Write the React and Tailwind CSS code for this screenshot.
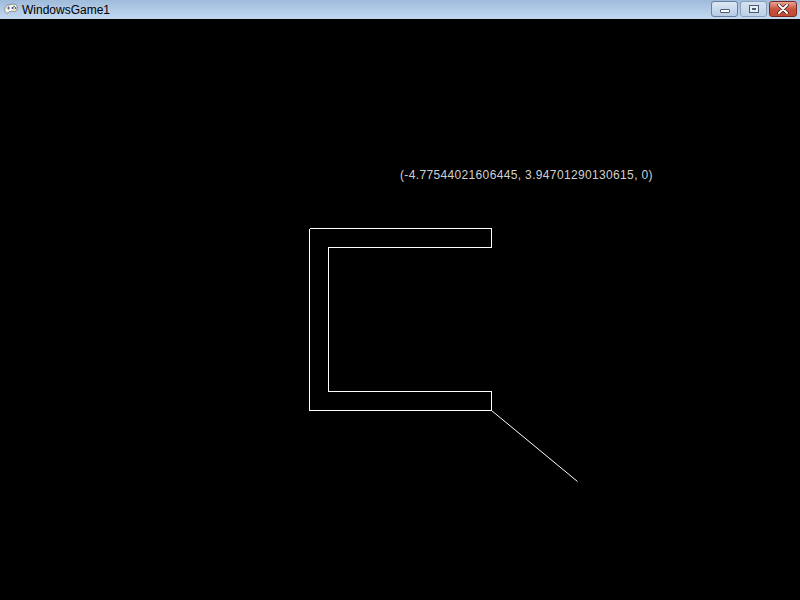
import React from "react";

function PadIcon() {
  return (
    <svg width="16" height="16" viewBox="0 0 16 16">
      <path d="M2 10 C1 7 3 4 6 4 L10 3 C13 3 15 5 14 8 C13 11 11 11 9 10 L6 11 C4 13 2 12 2 10 Z" fill="#f4f4f4" stroke="#777" strokeWidth="0.8" />
      <circle cx="11" cy="5.5" r="0.9" fill="#3a3" />
      <circle cx="12.5" cy="7" r="0.9" fill="#c33" />
      <circle cx="9.5" cy="7" r="0.9" fill="#33c" />
      <circle cx="11" cy="8.3" r="0.9" fill="#cc3" />
      <path d="M4 7 h3 M5.5 5.5 v3" stroke="#666" strokeWidth="1" />
    </svg>
  );
}

export default function App() {
  return (
    <div className="w-[800px] h-[600px] flex flex-col bg-black overflow-hidden">
      <div className="h-[19px] flex items-center bg-gradient-to-b from-[#9fbbdb] to-[#c3d9f0] relative">
        <div className="ml-[3px] mt-[-1px]"><PadIcon /></div>
        <span className="ml-[3px] text-[12px] leading-none text-black" style={{ fontFamily: '"Liberation Sans", Arial, sans-serif' }}>WindowsGame1</span>
        <div className="ml-auto mr-[3px] flex items-start gap-[2px] self-start mt-[1px]">
          <div className="w-[27px] h-[16px] rounded-[3px] border border-[#6a7f9c] bg-gradient-to-b from-[#dde8f4] to-[#b6cbe3] flex items-center justify-center">
            <div className="w-[10px] h-[4px] bg-white border border-[#4a5a70] rounded-[1px] mt-[3px]" />
          </div>
          <div className="w-[27px] h-[16px] rounded-[3px] border border-[#8aa0bd] bg-gradient-to-b from-[#d5e2f0] to-[#bed1e7] flex items-center justify-center">
            <div className="w-[10px] h-[8px] border border-[#4a5a70] bg-[#e8eef6] flex items-center justify-center">
              <div className="w-[4px] h-[2px] bg-[#4a5a70]" />
            </div>
          </div>
          <div className="w-[28px] h-[16px] rounded-[3px] border border-[#7a2a20] bg-gradient-to-b from-[#e7a596] via-[#c8523c] to-[#c24a32] flex items-center justify-center">
            <svg width="12" height="10" viewBox="0 0 12 10">
              <path d="M2 1 L10 9 M10 1 L2 9" stroke="#3a1a14" strokeWidth="3.4" strokeLinecap="round" />
              <path d="M2 1 L10 9 M10 1 L2 9" stroke="#ffffff" strokeWidth="2" strokeLinecap="round" />
            </svg>
          </div>
        </div>
      </div>
      <div className="flex-1 relative bg-black">
        <svg className="absolute left-0 top-0" width="800" height="581" viewBox="0 19 800 581">
          <polyline
            points="309.5,228.5 491.5,228.5 491.5,247.5 328.5,247.5 328.5,391.5 491.5,391.5 491.5,410.5 309.5,410.5 309.5,228.5"
            fill="none"
            stroke="#ffffff"
            strokeWidth="1"
            shapeRendering="crispEdges"
          />
          <line x1="491.5" y1="410.5" x2="577.5" y2="481.5" stroke="#ffffff" strokeWidth="1" />
        </svg>
        <div
          className="absolute left-[400px] top-[150px] text-[12px] leading-none text-[#d0d0d0] tracking-[0.35px] whitespace-nowrap"
          style={{ fontFamily: '"Liberation Sans", Arial, sans-serif' }}
        >
          (-4.77544021606445, 3.94701290130615, 0)
        </div>
      </div>
    </div>
  );
}
